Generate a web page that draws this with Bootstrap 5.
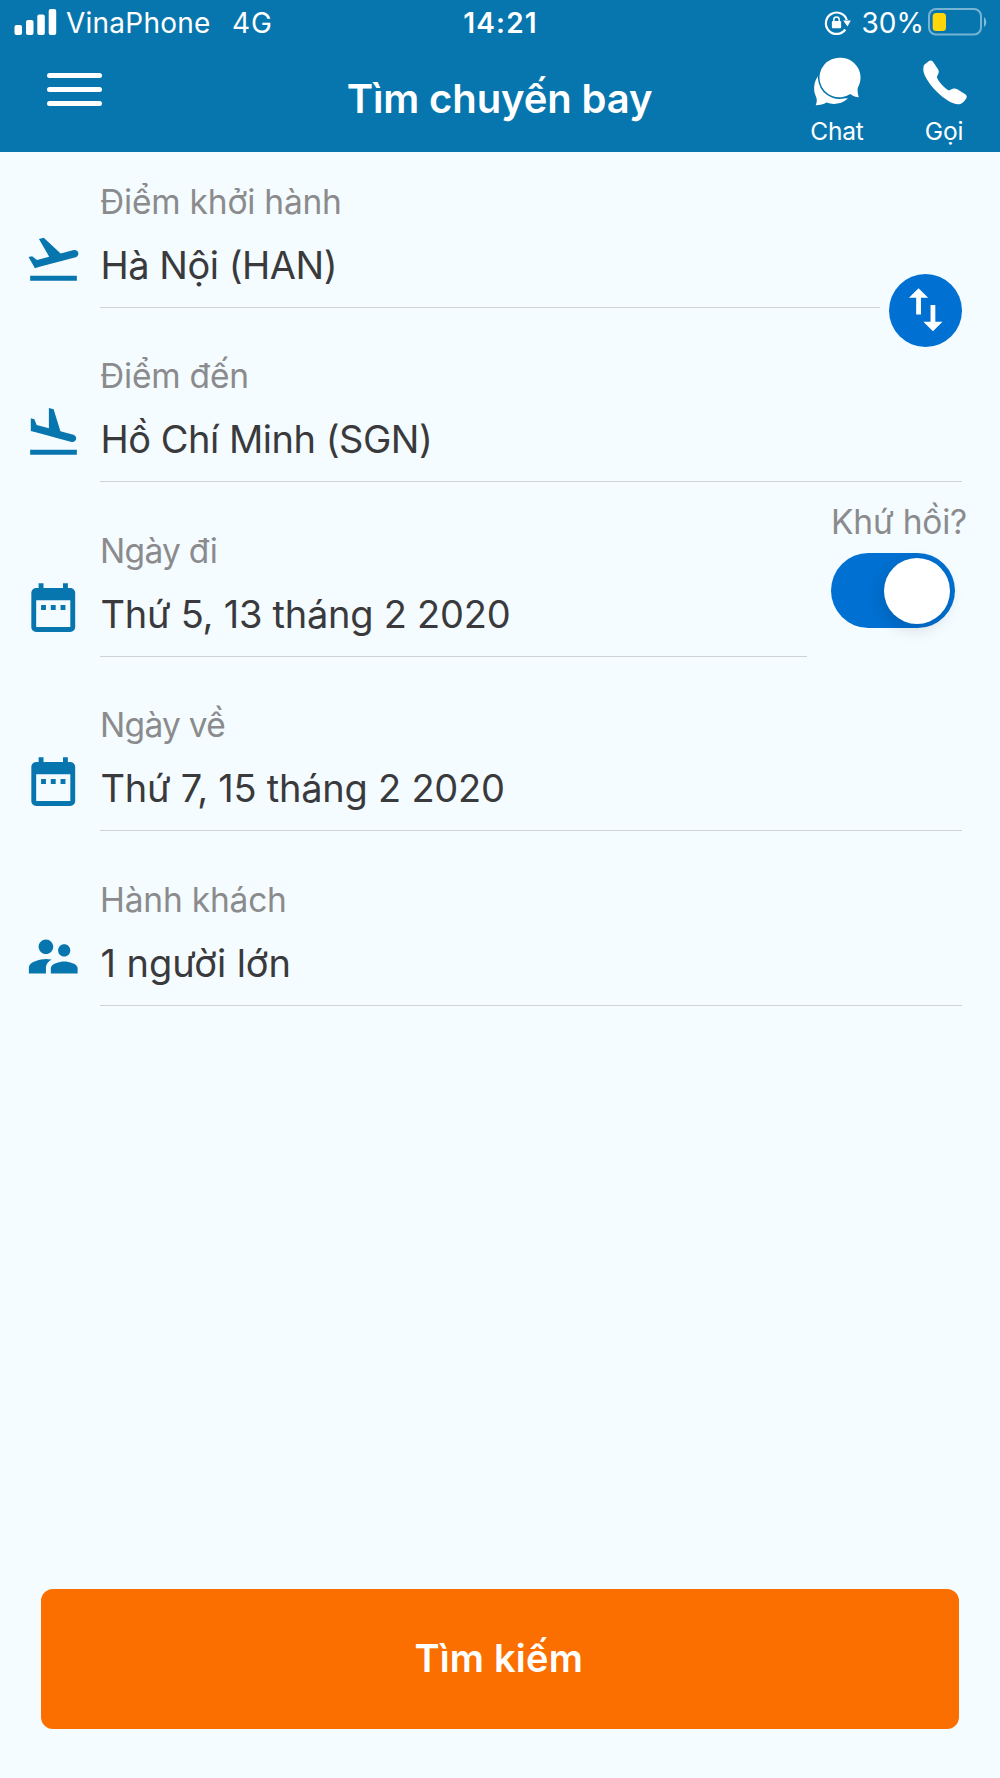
<!DOCTYPE html>
<html lang="vi">
<head>
<meta charset="utf-8">
<meta name="viewport" content="width=device-width, initial-scale=1">
<title>Tìm chuyến bay</title>
<link href="https://cdn.jsdelivr.net/npm/bootstrap@5.3.0/dist/css/bootstrap.min.css" rel="stylesheet">
<style>
body{font-family:Inter,"Liberation Sans",sans-serif;background:#f4fcff;color:#3a3a3c}
.screen{width:1000px;height:1778px;overflow:hidden}
.topbar{background:#0876ae;height:152px;color:#fff}
.side{flex:1 1 0}
.status{height:46px;font-size:28px;line-height:46px;padding:0 13px 0 14px}
.status svg,.tool svg,.ico svg{flex:none;display:block}
.carrier{margin-left:9px;letter-spacing:.23px}
.network{margin-left:21.5px;letter-spacing:.9px}
.clock{font-weight:600;letter-spacing:1.2px}
.percent{margin-left:11px}
.battery{margin-left:2px}
.navrow{height:106px;padding:0 21px 0 47px}
.menu{width:55px;height:33px;margin-top:27px;padding:0;border:0;background:none}
.menu i{display:block;height:5px;border-radius:3px;background:#fff}
.title{font-size:40px;font-weight:580;line-height:48px;margin:29px 27px 0 0;letter-spacing:-.12px}
.tools{gap:37px}
.tool{font-size:24.5px;line-height:30px;width:70px;letter-spacing:-.2px;color:#fff}
.field{height:174.5px}
.field.first{height:155.5px}
.ico{width:100px;padding:0 0 20px 24px;color:#0876ae}
.lab{font-size:33.5px;line-height:40px;color:#8b8b8d;letter-spacing:-.2px;white-space:nowrap}
.lab.tight{letter-spacing:-.7px}
.val{font-size:38px;line-height:46px;margin-top:20px;padding:0 0 18.8px .5px;letter-spacing:-.25px}
.val.tight{letter-spacing:-.48px}
.val.loose{letter-spacing:-.06px}
.fbody{border-bottom:1.5px solid #cdd3d7}
.form-area{padding-right:38px}
.swap{width:73px;height:73px;background:#0070d2;margin:0 0 -39px 9.5px}
.trip{width:155px;padding-left:24px;margin-bottom:28.5px}
.toggle{width:124px;height:75.5px;background:#0070d2;padding:5px;margin-top:10.5px}
.thumb{width:66px;height:66px;background:#fff;box-shadow:-2px 5px 16px rgba(0,0,0,.15)}
.find,.find:hover{background:#fb6e00;color:#fff;height:139.5px;margin:0 41px 49.5px 40.5px;border-radius:12px;font-size:38px;font-weight:580;border:0;letter-spacing:.2px;padding:0 2px 0 0}
</style>
<script src="https://cdn.jsdelivr.net/npm/bootstrap@5.3.0/dist/js/bootstrap.bundle.min.js"></script>
</head>
<body>
<svg width="0" height="0" class="position-absolute">
 <symbol id="calendar" viewBox="0 0 24 24"><path fill="currentColor" d="M9 11H7v2h2v-2zm4 0h-2v2h2v-2zm4 0h-2v2h2v-2zm2-7h-1V2h-2v2H8V2H6v2H5c-1.110 0-1.990.9-1.990 2L3 20c0 1.100.890 2 2 2h14c1.100 0 2-.9 2-2V6c0-1.100-.9-2-2-2zm0 16H5V9h14v11z"/></symbol>
</svg>
<div class="screen d-flex flex-column">
<header class="topbar">
 <div class="status d-flex">
  <div class="side d-flex">
   <svg width="43" height="46" fill="#fff"><rect x=".5" y="25" width="7.500" height="10" rx="2"/><rect x="12" y="20" width="7.500" height="15" rx="2"/><rect x="23.300" y="14.500" width="7.500" height="20.500" rx="2"/><rect x="34.700" y="9" width="7.500" height="26" rx="2"/></svg>
   <span class="carrier">VinaPhone</span><span class="network">4G</span>
  </div>
  <div class="clock">14:21</div>
  <div class="side d-flex justify-content-end">
   <svg width="27" height="46" viewBox="824 0 27 46"><path d="M845.300 29.500A10.700 10.700 0 1 1 846.800 20" fill="none" stroke="#fff" stroke-width="2.200"/><path d="M843.200 20.500h7.600l-3.300 6z" fill="#fff"/><rect x="831.900" y="21" width="9.200" height="7.300" rx="1" fill="#fff"/><path d="M833.800 22v-2.200a2.700 2.700 0 0 1 5.400 0V22" fill="none" stroke="#fff" stroke-width="1.500"/></svg>
   <span class="percent">30%</span>
   <svg class="battery" width="61" height="46" viewBox="927 0 61 46"><rect x="930" y="9" width="52" height="25.500" rx="7" fill="none" stroke="#fff" stroke-opacity=".45" stroke-width="2"/><rect x="933.700" y="13" width="13.300" height="18" rx="3.500" fill="#ffd60a"/><path d="M985 17a6.500 6.500 0 0 1 0 10z" fill="#fff" fill-opacity=".5"/></svg>
  </div>
 </div>
 <nav class="navrow d-flex">
  <div class="side"><button class="menu d-flex flex-column justify-content-between" aria-label="Menu"><i class="w-100"></i><i class="w-100"></i><i class="w-100"></i></button></div>
  <h1 class="title">Tìm chuyến bay</h1>
  <div class="side tools d-flex justify-content-end">
   <a class="tool d-flex flex-column align-items-center text-decoration-none" href="#"><svg width="60" height="70" viewBox="807 46 60 70" fill="#fff"><path d="M815.700 105.200C817.500 101.500 817 98.500 815.500 95.500A20 20 0 0 1 828 69C822 84 831 98 848 98.500C841 104.500 833 105 826.500 102.500C823.500 104.500 820 105.200 815.700 105.200Z"/><path d="M841 57.800a19.800 19.800 0 0 1 17 29.500c-.8 2.700-.5 6 .8 10-3.500-.3-6.200-1.500-8.500-3.300A19.800 19.800 0 1 1 841 57.800z" stroke="#0876ae" stroke-width="3" paint-order="stroke"/></svg>Chat</a>
   <a class="tool d-flex flex-column align-items-center text-decoration-none" href="#"><svg width="60" height="70" viewBox="914 45.500 60 70" fill="#fff"><path d="M924 64.500l5-4c1.500-1 3-.7 4 .8l5 7.500c1 1.500 1 3 .2 4.600l-1.400 3c1.700 4.700 6.700 10.300 12 13.600l4-1.800c1.600-.5 3-.3 4.500.6l8 5c1.600 1.200 1.900 2.800.8 4.400-1.600 2.500-3.500 4.500-6 5.300-5.500 1.500-15-4-23.500-12.500-8-8-13.500-17-13.300-22.500.1-1.500.2-2.600.7-4z"/></svg>Gọi</a>
  </div>
 </nav>
</header>
<main class="form-area flex-grow-1">
 <div class="field first d-flex align-items-end">
  <div class="ico"><svg width="59" height="59" viewBox="0 0 24 24" fill="currentColor"><path d="M2.500 19h19v2h-19zm19.570-9.360c-.21-.8-1.040-1.280-1.840-1.060L14.920 10l-6.900-6.430-1.930.51 4.140 7.170-4.970 1.330-1.970-1.540-1.450.39 1.820 3.160.77 1.330 1.600-.43 5.310-1.420 4.350-1.160L21 11.490c.81-.23 1.280-1.050 1.070-1.850z"/></svg></div>
  <div class="fbody flex-grow-1"><div class="lab">Điểm khởi hành</div><div class="val tight">Hà Nội (HAN)</div></div>
  <button class="swap btn rounded-circle border-0 p-0 d-flex align-items-center justify-content-center" aria-label="Đổi chiều"><svg width="57.500" height="57.500" viewBox="0 0 24 24" fill="#fff"><path d="M16 17.010V10h-2v7.010h-3L15 21l4-3.990h-3zM9 3L5 6.990h3V14h2V6.990h3L9 3z"/></svg></button>
 </div>
 <div class="field d-flex align-items-end">
  <div class="ico"><svg width="59" height="59" viewBox="0 0 24 24" fill="currentColor"><path d="M2.500 19h19v2h-19zm7.180-5.730l4.350 1.160 5.310 1.420c.8.21 1.620-.26 1.840-1.060.21-.8-.26-1.620-1.060-1.840l-5.310-1.420-2.760-9.020L10.120 2v8.280L5.150 8.950l-.93-2.320-1.450-.39v5.170l1.600.43 5.310 1.430z"/></svg></div>
  <div class="fbody flex-grow-1"><div class="lab">Điểm đến</div><div class="val tight">Hồ Chí Minh (SGN)</div></div>
 </div>
 <div class="field d-flex align-items-end">
  <div class="ico"><svg width="58.500" height="59"><use href="#calendar"/></svg></div>
  <div class="fbody flex-grow-1"><div class="lab tight">Ngày đi</div><div class="val">Thứ 5, 13 tháng 2 2020</div></div>
  <div class="trip"><div class="lab">Khứ hồi?</div><div class="toggle rounded-pill d-flex justify-content-end"><div class="thumb rounded-circle"></div></div></div>
 </div>
 <div class="field d-flex align-items-end">
  <div class="ico"><svg width="58.500" height="59"><use href="#calendar"/></svg></div>
  <div class="fbody flex-grow-1"><div class="lab tight">Ngày về</div><div class="val">Thứ 7, 15 tháng 2 2020</div></div>
 </div>
 <div class="field d-flex align-items-end">
  <div class="ico"><svg width="58.500" height="59" viewBox="0 0 24 24" fill="currentColor"><path d="M16.500 12c1.380 0 2.490-1.120 2.490-2.500S17.880 7 16.500 7C15.120 7 14 8.120 14 9.500s1.120 2.500 2.500 2.500zM9 11c1.660 0 2.990-1.340 2.990-3S10.660 5 9 5C7.340 5 6 6.340 6 8s1.340 3 3 3zm7.500 3c-1.830 0-5.500.92-5.500 2.750V19h11v-2.250c0-1.830-3.670-2.750-5.500-2.750zM9 13c-2.330 0-7 1.170-7 3.500V19h7v-2.250c0-.85.33-2.340 2.370-3.470C10.500 13.100 9.660 13 9 13z"/></svg></div>
  <div class="fbody flex-grow-1"><div class="lab">Hành khách</div><div class="val loose">1 người lớn</div></div>
 </div>
</main>
<button class="btn find">Tìm kiếm</button>
</div>
</body>
</html>
